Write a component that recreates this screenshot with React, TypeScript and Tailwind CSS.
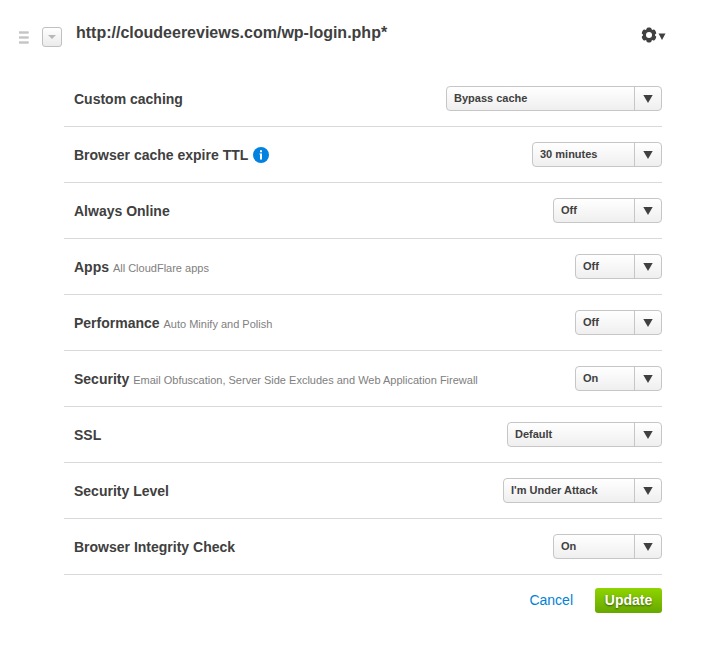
/**
 * PageRuleEditor
 *
 * Expanded page rule row: URL pattern header, a list of settings with
 * a drop-down each, and the cancel / update actions.
 */

import React, { useState } from "react";
import { clsx } from "clsx";

interface RuleSetting {
  id: string;
  label: string;
  hint?: string;
  info?: boolean;
  value: string;
  options: string[];
  /** Width class of the drop-down */
  width: string;
}

const SETTINGS: RuleSetting[] = [
  {
    id: "custom-caching",
    label: "Custom caching",
    value: "Bypass cache",
    options: ["Bypass cache", "Cache everything"],
    width: "w-[216px]",
  },
  {
    id: "browser-ttl",
    label: "Browser cache expire TTL",
    info: true,
    value: "30 minutes",
    options: ["30 minutes", "1 hour", "1 day"],
    width: "w-[130px]",
  },
  {
    id: "always-online",
    label: "Always Online",
    value: "Off",
    options: ["On", "Off"],
    width: "w-[109px]",
  },
  {
    id: "apps",
    label: "Apps",
    hint: "All CloudFlare apps",
    value: "Off",
    options: ["On", "Off"],
    width: "w-[87px]",
  },
  {
    id: "performance",
    label: "Performance",
    hint: "Auto Minify and Polish",
    value: "Off",
    options: ["On", "Off"],
    width: "w-[87px]",
  },
  {
    id: "security",
    label: "Security",
    hint: "Email Obfuscation, Server Side Excludes and Web Application Firewall",
    value: "On",
    options: ["On", "Off"],
    width: "w-[87px]",
  },
  {
    id: "ssl",
    label: "SSL",
    value: "Default",
    options: ["Default", "Off", "Flexible", "Full"],
    width: "w-[155px]",
  },
  {
    id: "security-level",
    label: "Security Level",
    value: "I'm Under Attack",
    options: ["I'm Under Attack", "High", "Medium", "Low"],
    width: "w-[159px]",
  },
  {
    id: "integrity-check",
    label: "Browser Integrity Check",
    value: "On",
    options: ["On", "Off"],
    width: "w-[109px]",
  },
];

function InfoIcon() {
  return (
    <svg viewBox="0 0 16 16" className="h-4 w-4" aria-hidden="true">
      <circle cx="8" cy="8" r="8" fill="#0082e0" />
      <path d="M7 3.2h2v2H7zM6.5 6.4H9v6.2H7V7.6h-.5z" fill="#fff" />
    </svg>
  );
}

function GearIcon() {
  return (
    <svg viewBox="-8 -8 16 16" className="h-4 w-4" aria-hidden="true">
      <g fill="#404040">
        {[0, 60, 120].map((angle) => (
          <rect
            key={angle}
            x="-2.6"
            y="-7.6"
            width="5.2"
            height="15.2"
            rx="1.8"
            transform={`rotate(${angle})`}
          />
        ))}
        <circle r="6.1" />
      </g>
      <circle r="3" fill="#fff" />
    </svg>
  );
}

function SettingRow({ setting }: { setting: RuleSetting }) {
  const [value, setValue] = useState(setting.value);

  return (
    <div className="flex items-center justify-between border-b border-[#d9d9d9] py-[15px] pl-[10px]">
      <div className="flex items-center gap-[5px]">
        <label htmlFor={setting.id} className="text-sm font-bold">
          {setting.label}{" "}
          {setting.hint && (
            <span className="text-[11px] font-normal text-[#808080]">
              {setting.hint}
            </span>
          )}
        </label>
        {setting.info && (
          <button type="button" aria-label={`About ${setting.label}`}>
            <InfoIcon />
          </button>
        )}
      </div>

      <div className={clsx("relative h-[25px] shrink-0", setting.width)}>
        <select
          id={setting.id}
          value={value}
          onChange={(e) => setValue(e.target.value)}
          className="block h-full w-full appearance-none rounded border border-[#c6c6c6] bg-linear-to-b from-white to-[#efefef] pr-8 pb-px pl-[7px] text-[11px] font-bold"
        >
          {setting.options.map((option) => (
            <option key={option}>{option}</option>
          ))}
        </select>
        {/* Divider and arrow over the native control */}
        <span className="pointer-events-none absolute inset-y-0 right-0 flex w-7 items-center border-l border-[#c6c6c6] pl-2">
          <svg viewBox="0 0 10 8" className="h-2 w-[10px]" aria-hidden="true">
            <path d="M0.3 0h9.4L5 8z" fill="#404040" />
          </svg>
        </span>
      </div>
    </div>
  );
}

export default function App() {
  return (
    <form
      className="bg-white pt-[23px] pr-[54px] pb-8 pl-[18px] font-['Liberation_Sans',Arial,sans-serif] text-[#404040]"
      onSubmit={(e) => e.preventDefault()}
    >
      {/* Rule header */}
      <header className="flex h-12 items-start">
        <button type="button" aria-label="Reorder rule" className="mt-2">
          <svg viewBox="0 0 11 13" className="h-[13px] w-[11px]">
            <path d="M1 0h9.6v3H1zM1 5h9.6v3H1zM1 10h9.6v3H1z" fill="#d6d6d6" />
            <path d="M1 1h9.6v1H1zM1 6h9.6v1H1zM1 11h9.6v1H1z" fill="#c4c4c4" />
          </svg>
        </button>
        <button
          type="button"
          aria-label="Collapse rule"
          className="mt-1 ml-[13px] flex h-5 w-5 items-center justify-center rounded-[3px] border border-[#c0c0c0] bg-linear-to-b from-white to-[#ebebeb]"
        >
          <svg viewBox="0 0 8 4" className="h-1 w-2">
            <path d="M0 0h8L4 4z" fill="#b8b8b8" />
          </svg>
        </button>
        <h1 className="ml-[14px] flex-1 text-base leading-5 font-bold">
          http://cloudeereviews.com/wp-login.php*
        </h1>
        <button
          type="button"
          aria-label="Rule options"
          className="-mr-1 mt-1 flex items-center gap-px"
        >
          <GearIcon />
          <svg viewBox="0 0 8 7" className="mt-0.5 h-[7px] w-2">
            <path d="M0.5 0.5h7L4 7z" fill="#404040" />
          </svg>
        </button>
      </header>

      <div className="ml-[46px]">
        {SETTINGS.map((setting) => (
          <SettingRow key={setting.id} setting={setting} />
        ))}

        {/* Actions */}
        <div className="flex items-center justify-end gap-[22px] pt-[13px] text-sm">
          <button type="button" className="pb-0.5 text-[#0082d6]">
            Cancel
          </button>
          <button
            type="submit"
            className="h-[25px] w-[67px] rounded-[3px] bg-linear-to-b from-[#8fd400] to-[#67a800] pb-0.5 font-bold text-white text-shadow-[0_1px_2px_rgb(0_0_0/0.5)]"
          >
            Update
          </button>
        </div>
      </div>
    </form>
  );
}
